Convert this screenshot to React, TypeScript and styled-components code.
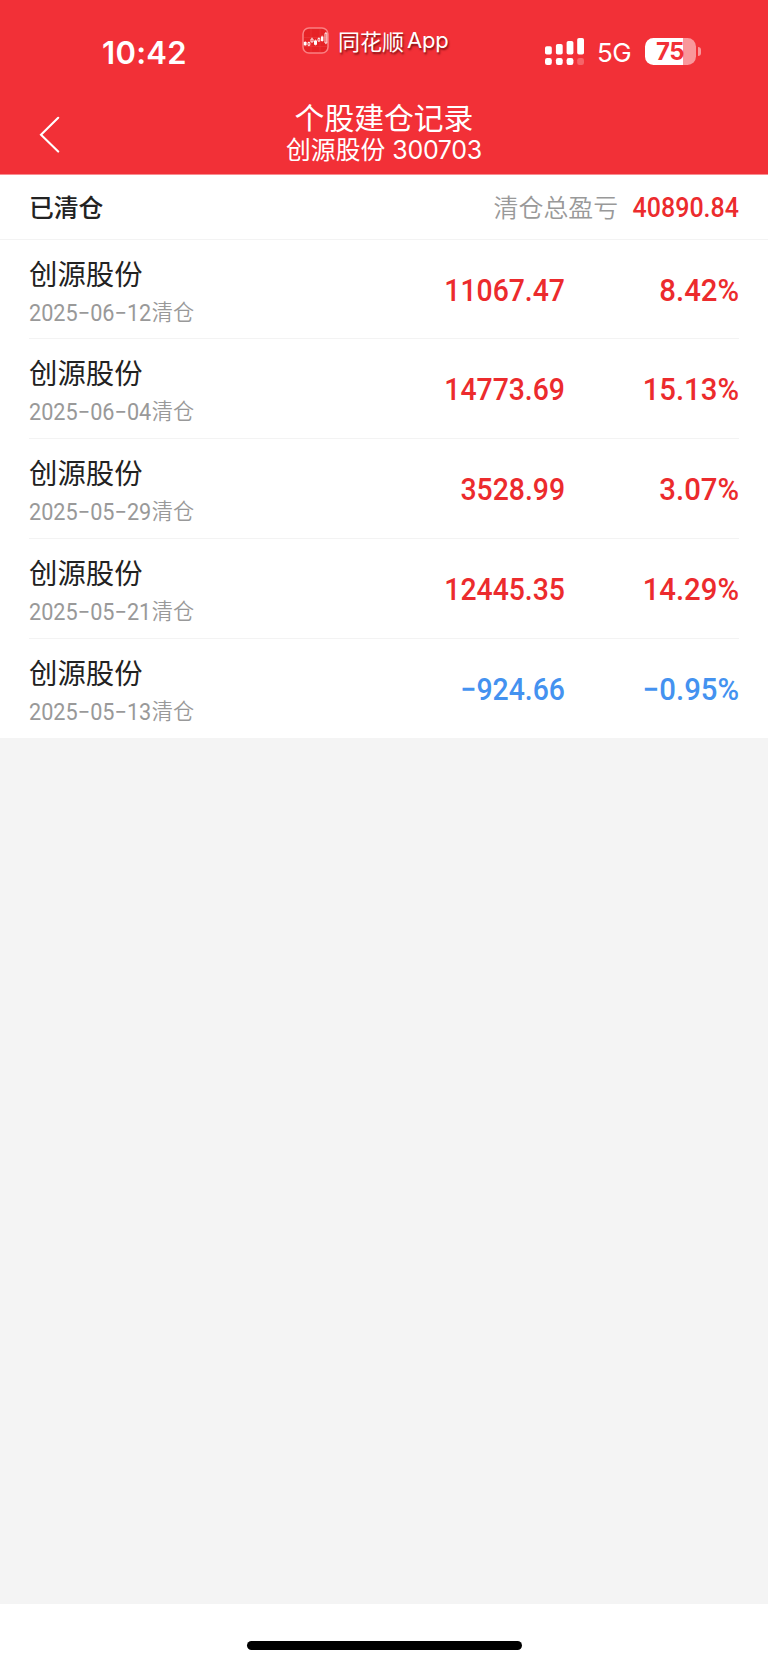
import React from "react";
import styled, { createGlobalStyle } from "styled-components";

const cjk = '"Noto Sans CJK SC", sans-serif';

const GlobalStyle = createGlobalStyle`
  *, *::before, *::after { box-sizing: border-box; }
  body { margin: 0; background: #fff; font-family: ${cjk}; }
`;

const Screen = styled.div`
  display: flex;
  flex-direction: column;
  width: 768px;
  height: 1665px;
  overflow: hidden;
  background: #f4f4f4;
`;

const Header = styled.header`
  flex: none;
  height: 175px;
  color: #fff;
  background: #f23037;
  border-bottom: 1px solid #f98c90;
`;

const StatusBar = styled.div`
  display: grid;
  grid-template-columns: 302px 1fr 223px;
  height: 96px;
`;

const Clock = styled.time`
  padding: 34px 0 0 102px;
  font: 600 31px/38px Inter, sans-serif;
  letter-spacing: 0.3px;
`;

const Brand = styled.div`
  display: flex;
  align-items: center;
  height: 54px;
  margin-top: 13px;
  gap: 9px;
`;

const BrandName = styled.span`
  display: flex;
  align-items: center;
  gap: 3px;
  padding-bottom: 1px;
  font-size: 22px;
  line-height: 28px;
  text-shadow: 1px 2px 2px rgba(70, 0, 0, 0.65);
`;

const BrandLatin = styled.span`
  padding-top: 1px;
  font-family: Inter, sans-serif;
  font-size: 22px;
  letter-spacing: -0.2px;
`;

const Indicators = styled.div`
  display: flex;
  align-items: center;
  height: 27px;
  margin-top: 38px;
`;

const Network = styled.span`
  width: 48px;
  padding: 2px 0 0 12px;
  margin-right: 12px;
  font: 400 26px/30px Inter, sans-serif;
  letter-spacing: -0.6px;
`;

const Battery = styled.div`
  display: flex;
  align-items: center;
  justify-content: center;
  width: 51px;
  height: 27px;
  padding: 1px 1px 0 0;
  border-radius: 8.5px;
  color: #f23037;
  background: linear-gradient(90deg, #fff 38px, #f9979b 38px);
  font: 700 24px/26px Inter, sans-serif;
  letter-spacing: -0.6px;
`;

const BatteryCap = styled.span`
  width: 3px;
  height: 9px;
  margin-left: 2px;
  border-radius: 0 4px 4px 0;
  background: #f9979b;
`;

const NavBar = styled.div`
  display: grid;
  grid-template-columns: 100px 1fr 100px;
  height: 78px;
`;

const BackButton = styled.button`
  display: flex;
  padding: 20px 0 0 39px;
  border: 0;
  color: inherit;
  background: none;
`;

const Heading = styled.div`
  display: flex;
  flex-direction: column;
  align-items: center;
  padding-top: 5px;
`;

const Title = styled.h1`
  margin: 0;
  font-weight: 400;
  font-size: 29.8px;
  line-height: 31px;
`;

const Subtitle = styled.div`
  display: flex;
  gap: 7px;
  font-size: 24.8px;
  line-height: 32px;
`;

const StockCode = styled.span`
  padding-top: 3px;
  font: 400 25px/30px Inter, sans-serif;
  letter-spacing: -0.3px;
`;

const Summary = styled.section`
  display: flex;
  flex: none;
  align-items: center;
  height: 65px;
  padding: 0 29px;
  background: #fff;
  border-bottom: 1px solid #f3f3f3;
`;

const SummaryTitle = styled.h2`
  flex: 1;
  margin: 0;
  padding-bottom: 2px;
  color: #222;
  font-weight: 500;
  font-size: 24.8px;
  line-height: 36px;
`;

const SummaryLabel = styled.span`
  padding-bottom: 2px;
  margin-right: 6px;
  color: #999;
  font-weight: 350;
  font-size: 24.9px;
  line-height: 36px;
`;

const SummaryTotal = styled.span`
  padding-top: 1px;
  color: #ec2b2d;
  font: 500 27px/36px Roboto, sans-serif;
  transform: scaleX(0.925);
  transform-origin: right;
`;

const List = styled.ul`
  flex: none;
  height: 498px;
  margin: 0;
  padding: 0 29px;
  list-style: none;
  background: #fff;
`;

const Row = styled.li`
  display: grid;
  grid-template-columns: 1fr 240px 174px;
  height: 100px;
  &:first-child { height: 99px; }
  &:last-child { height: 99px; }
  &:not(:last-child) { border-bottom: 1px solid #f3f3f3; }
`;

const Name = styled.div`
  padding-top: 14px;
  color: #222;
  font-size: 28.4px;
  line-height: 38px;
`;

const ClosedOn = styled.div`
  display: flex;
  color: #999;
  font-weight: 350;
  font-size: 21.2px;
  line-height: 38px;
`;

const DateText = styled.span`
  padding-top: 2px;
  margin-right: -8px;
  font: 400 23.2px/38px Roboto, sans-serif;
  transform: scaleX(0.935);
  transform-origin: left;
`;

const Value = styled.div<{ $loss: boolean }>`
  padding-top: 32px;
  text-align: right;
  color: ${({ $loss }) => ($loss ? "#4492f0" : "#ec2b2d")};
  font: 500 31px/38px Roboto, sans-serif;
  transform: scaleX(0.915);
  transform-origin: right;
`;

const Rate = styled(Value)`
  transform: scaleX(0.945);
`;

const HomeArea = styled.footer`
  display: flex;
  flex: none;
  align-items: center;
  justify-content: center;
  height: 61px;
  margin-top: auto;
  padding-top: 22px;
  background: #fff;
`;

const HomeIndicator = styled.div`
  width: 275px;
  height: 9.5px;
  border-radius: 5px;
  background: #000;
`;

const records = [
  { date: "2025−06−12", amount: "11067.47", rate: "8.42%" },
  { date: "2025−06−04", amount: "14773.69", rate: "15.13%" },
  { date: "2025−05−29", amount: "3528.99", rate: "3.07%" },
  { date: "2025−05−21", amount: "12445.35", rate: "14.29%" },
  { date: "2025−05−13", amount: "−924.66", rate: "−0.95%" },
];

const BrandIcon = () => (
  <svg width="27" height="27" viewBox="0 0 27 27" fill="none">
    <rect x="1" y="1" width="25" height="25" rx="6" fill="#e62226" stroke="#fa8083" strokeWidth="1.5" />
    <path d="M2 10.5H25M2 19.5H25M9 2V25M18 2V25" stroke="#f04447" strokeWidth=".4" />
    <path d="M1.8 15h2.8v3.2H1.8zM12 13.5h3v4.3h-3zM19 9.5h2.4v4.6H19z" fill="#fff" />
    <path d="M3.2 14v5M13.5 12.5v6M20.2 8.5v6.3" stroke="#fff" strokeWidth=".6" />
    <path d="M6 15.5h1.8v2.8H6zM9 12h2v3H9zM16 11.5h1.8v2.7H16zM23 6.2h1.8v9.8H23z" stroke="#fff" strokeWidth=".9" />
    <path d="M6.9 14.5v1M6.9 18.3v1M10 10.5v1.5M16.9 10.2v1.3M23.9 5v1.2M23.9 16v1.2" stroke="#fff" strokeWidth=".6" />
  </svg>
);

const SignalIcon = () => (
  <svg width="40" height="27" viewBox="0 0 40 27" fill="#fff">
    <rect x="0" y="8.3" width="6.8" height="8.2" rx="1.8" />
    <rect x="10.9" y="6" width="6.8" height="10.5" rx="1.8" />
    <rect x="21.6" y="3" width="6.8" height="13.5" rx="1.8" />
    <rect x="32.2" y="0" width="6.8" height="16.5" rx="1.8" />
    <rect x="0" y="20" width="6.8" height="7" rx="2.2" />
    <rect x="10.9" y="20" width="6.8" height="7" rx="2.2" />
    <rect x="21.6" y="20" width="6.8" height="7" rx="2.2" />
    <rect x="32.2" y="20" width="6.8" height="7" rx="2.2" fillOpacity=".25" />
  </svg>
);

const BackIcon = () => (
  <svg width="22" height="37" viewBox="0 0 22 37" fill="none" stroke="#fff" strokeWidth="2.1" strokeLinecap="round">
    <path d="M19.2 1.8L2 18.7L19.2 35.6" />
  </svg>
);

export default function App() {
  return (
    <Screen>
      <GlobalStyle />
      <Header>
        <StatusBar>
          <Clock>10:42</Clock>
          <Brand>
            <BrandIcon />
            <BrandName>
              同花顺<BrandLatin>App</BrandLatin>
            </BrandName>
          </Brand>
          <Indicators>
            <SignalIcon />
            <Network>5G</Network>
            <Battery>75</Battery>
            <BatteryCap />
          </Indicators>
        </StatusBar>
        <NavBar>
          <BackButton aria-label="返回">
            <BackIcon />
          </BackButton>
          <Heading>
            <Title>个股建仓记录</Title>
            <Subtitle>
              创源股份<StockCode>300703</StockCode>
            </Subtitle>
          </Heading>
        </NavBar>
      </Header>
      <Summary>
        <SummaryTitle>已清仓</SummaryTitle>
        <SummaryLabel>清仓总盈亏</SummaryLabel>
        <SummaryTotal>40890.84</SummaryTotal>
      </Summary>
      <List>
        {records.map(({ date, amount, rate }) => (
          <Row key={date}>
            <div>
              <Name>创源股份</Name>
              <ClosedOn>
                <DateText>{date}</DateText>清仓
              </ClosedOn>
            </div>
            <Value $loss={amount.startsWith("−")}>{amount}</Value>
            <Rate $loss={rate.startsWith("−")}>{rate}</Rate>
          </Row>
        ))}
      </List>
      <HomeArea>
        <HomeIndicator />
      </HomeArea>
    </Screen>
  );
}
